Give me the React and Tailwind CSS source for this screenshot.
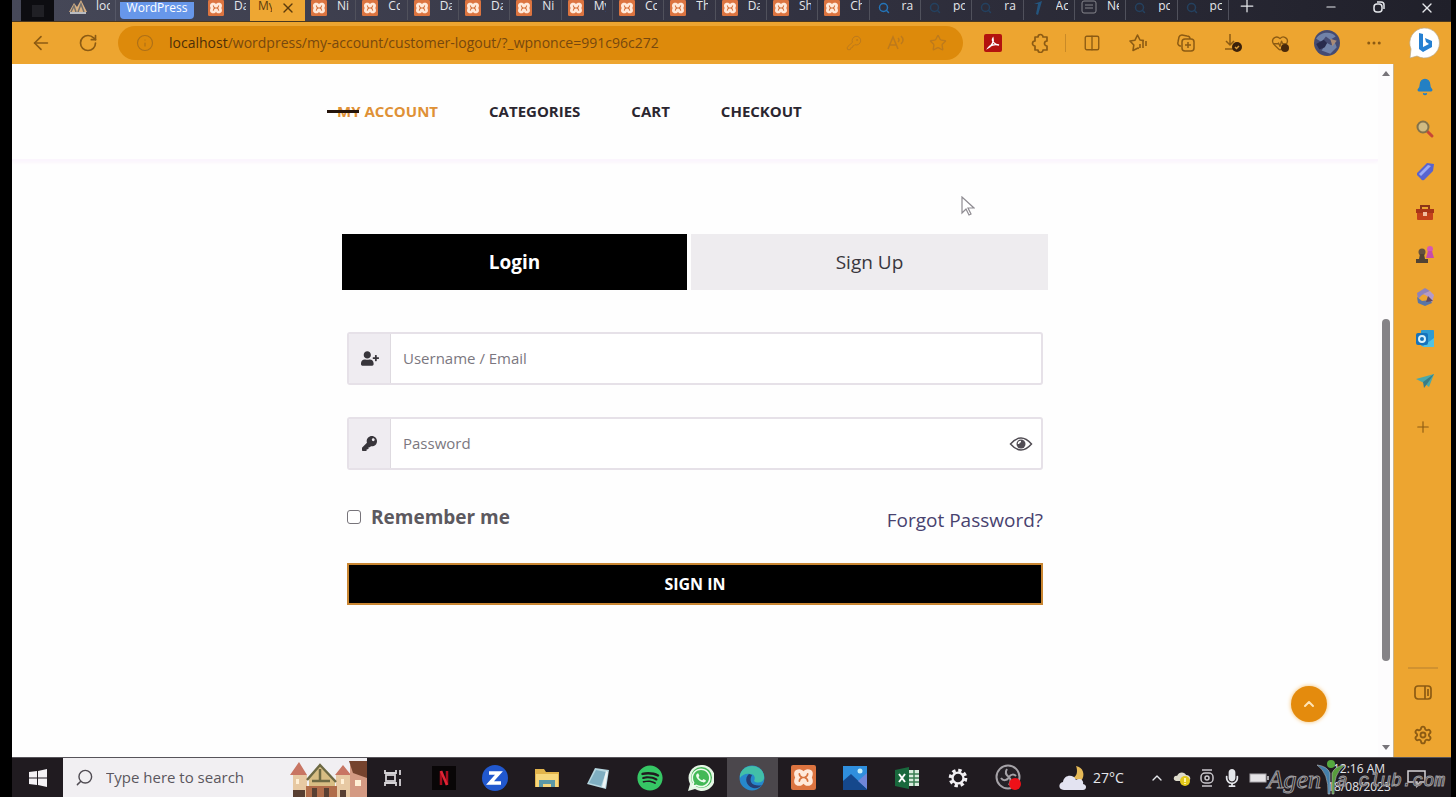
import {
  ArrowLeft, Bell, ChevronUp, Columns2, HeartPulse, Info, KeyRound, Minus,
  MoreHorizontal, Plus, RotateCw, Search, Settings, Star, X,
} from "lucide-react";
import { FaKey, FaMicrophone, FaSpotify, FaUserPlus, FaWhatsapp } from "react-icons/fa";


const tabs = [
  { title: "Ni", icon: "xampp" },
  { title: "Cc", icon: "xampp" },
  { title: "Da", icon: "xampp" },
  { title: "Da", icon: "xampp" },
  { title: "Ni", icon: "xampp" },
  { title: "My", icon: "xampp" },
  { title: "Cc", icon: "xampp" },
  { title: "Th", icon: "xampp" },
  { title: "Da", icon: "xampp" },
  { title: "Sh", icon: "xampp" },
  { title: "Ch", icon: "xampp" },
  { title: "ra", icon: "search" },
  { title: "po", icon: "dim" },
  { title: "ra", icon: "dim" },
  { title: "Ac", icon: "bolt" },
  { title: "Ne", icon: "news" },
  { title: "pc", icon: "dim" },
  { title: "pc", icon: "dim" },
];

function Xampp({ className }) {
  return (
    <svg viewBox="0 0 24 24" className={className}>
      <rect width="24" height="24" rx="2" fill="#dc7440" />
      <path d="M8 4c2 0 3 1 4 2 1-1 2-2 4-2 5 0 6 4 4 8 2 4 1 8-4 8-2 0-3-1-4-2-1 1-2 2-4 2-5 0-6-4-4-8-2-4-1-8 4-8z" fill="#ffe9da" />
      <path d="M8 8.500q0 2.500 3 3.500-3 1-3 3.500M16 8.500q0 2.500-3 3.500 3 1 3 3.500M9.500 12h5" fill="none" stroke="#d8743f" strokeWidth="1.600" strokeLinecap="round" />
    </svg>
  );
}

function TabIcon({ icon }) {
  if (icon === "xampp") return <Xampp className="size-4 shrink-0" />;
  if (icon === "search") return <Search className="size-4 shrink-0 p-0.5 text-[#2474b8]" strokeWidth={3} />;
  if (icon === "dim") return <Search className="size-4 shrink-0 p-0.5 text-[#24415f]" strokeWidth={3} />;
  if (icon === "bolt") {
    return (
      <svg viewBox="0 0 16 16" className="size-4 shrink-0">
        <path d="M4 4l8-3-4 14-2-1 2-10z" fill="#24557e" />
      </svg>
    );
  }
  return (
    <svg viewBox="0 0 16 16" className="size-4 shrink-0" fill="none" stroke="#85858c">
      <rect x="1" y="1" width="14" height="12" rx="2" />
      <path d="M4 5h8M4 8h8" />
    </svg>
  );
}

function TabStrip() {
  return (
    <div className="flex h-[22px] items-end overflow-hidden border-b border-[#4a3820] bg-linear-to-r from-[#464858] via-[#343443] to-[#20202a] text-xs text-gray-200">
      <div className="flex h-full w-[42px] justify-end">
        <div className="flex h-full w-[33px] items-center justify-center bg-[#0d0d11]">
          <span className="size-3 bg-[#202025]" />
        </div>
      </div>
      <button className="flex h-full w-[62px] items-start gap-2 overflow-hidden border-r border-[#555766] pl-3.5 leading-3">
        <svg viewBox="0 0 20 16" className="w-5 shrink-0">
          <path d="M1 12L6 3l3 4 4-7 6 12z" fill="#d9b184" />
          <path d="M3 12l3-6 2 6M10 12l3-8 3 8" fill="none" stroke="#72706e" strokeWidth="1.500" />
          <path d="M2 13h16" stroke="#b9bcc2" strokeWidth="2" />
        </svg>
        <span className="w-3.5 overflow-hidden">loc</span>
      </button>
      <div className="h-full w-[86px] px-1">
        <button className="h-[17px] w-[74px] rounded-b bg-[#6797ea] pb-1 text-xs leading-3 text-white">WordPress</button>
      </div>
      <button className="flex h-full w-12 items-start gap-2.5 overflow-hidden pl-1.5 leading-3">
        <Xampp className="size-4 shrink-0" />
        <span className="w-3 shrink-0 overflow-hidden">Da</span>
      </button>
      <div className="flex h-full w-[55px] items-start gap-2 bg-[#eea733] pl-2 leading-3 text-[#5b3b0c]">
        <span className="w-3.5 overflow-hidden">My</span>
        <button aria-label="Close tab"><X className="size-4" /></button>
      </div>
      <div className="flex h-full min-w-0 flex-1 items-start">
        {tabs.map((tab, i) => (
          <button key={i} className="flex h-5 min-w-0 flex-1 items-start overflow-hidden border-r border-[#50515c] pl-1.5">
            <TabIcon icon={tab.icon} />
            <span className="ml-2.5 w-3 shrink-0 overflow-hidden text-left leading-3">{tab.title}</span>
          </button>
        ))}
      </div>
      <div className="flex h-full w-[222px] items-start leading-3">
        <button aria-label="New tab" className="w-9 pl-2"><Plus className="-mt-1 size-5" strokeWidth={1.5} /></button>
        <button aria-label="Minimize" className="ml-auto flex w-12 justify-center"><Minus className="size-3.5" /></button>
        <button aria-label="Restore" className="flex w-12 justify-center">
          <svg viewBox="0 0 14 14" className="size-3.5" fill="none" stroke="currentColor" strokeWidth="1.500">
            <rect x="2" y="4" width="8" height="8" rx="3" />
            <path d="M5 2h4a3 3 0 0 1 3 3v4" />
          </svg>
        </button>
        <button aria-label="Close" className="flex w-12 justify-center"><X className="size-4" /></button>
      </div>
    </div>
  );
}

function ToolButton({ label, children }) {
  return (
    <button aria-label={label} className="flex w-[47px] items-center justify-center">
      {children}
    </button>
  );
}

function Toolbar() {
  return (
    <div className="flex h-[42px] items-center bg-[#eda530] text-[#8c5b13]">
      <button aria-label="Back" className="ml-[18px]"><ArrowLeft className="size-[22px]" strokeWidth={1.8} /></button>
      <button aria-label="Reload" className="ml-[26px]"><RotateCw className="size-5" strokeWidth={2} /></button>
      <div className="ml-5 flex h-[34px] min-w-0 flex-1 items-center rounded-full bg-[#dd8a0b] pr-4 pl-[18px]">
        <Info className="size-[18px] shrink-0 text-[#ad7018]" strokeWidth={1.5} />
        <p className="ml-[15px] flex-1 truncate text-sm text-[#77480e]">
          <span className="text-[#4d2e08]">localhost</span>/wordpress/my-account/customer-logout/?_wpnonce=991c96c272
        </p>
        <div className="flex items-center gap-6 text-[#bd7a1c]">
          <KeyRound className="size-[18px] p-px" strokeWidth={1.5} />
          <svg viewBox="0 0 18 18" className="size-[18px]" fill="none" stroke="currentColor" strokeWidth="1.500">
            <path d="M1 15L6 3l5 12M3 11h6M11 4q2 2 0 4M14 2q4 4 0 8" />
          </svg>
          <Star className="size-[18px]" strokeWidth={1.8} />
        </div>
      </div>
      <div className="ml-1.5 flex h-full">
        <ToolButton label="Adobe Acrobat">
          <svg viewBox="0 0 18 18" className="size-[18px]">
            <rect width="18" height="18" rx="2" fill="#b3120e" />
            <path d="M4 14c4-2 6-7 5-10-2 3 2 7 6 7-4-1-9 0-11 3z" fill="none" stroke="#fff" strokeWidth="1.300" />
          </svg>
        </ToolButton>
        <ToolButton label="Extensions">
          <svg viewBox="0 0 20 20" className="size-5" fill="none" stroke="currentColor" strokeWidth="1.700" strokeLinejoin="round">
            <path d="M5 4h3a2.500 2.500 0 0 1 5 0h4v4a2.500 2.500 0 0 0 0 5v4h-4a2.500 2.500 0 0 1-5 0H5v-4a2.500 2.500 0 0 1 0-5z" />
          </svg>
        </ToolButton>
        <span className="mx-0.5 my-3 w-px bg-[#c98a27]" />
        <ToolButton label="Split screen"><Columns2 className="h-[18px] w-5" strokeWidth={1.8} /></ToolButton>
        <ToolButton label="Favorites">
          <svg viewBox="0 0 20 20" className="size-5" fill="none" stroke="currentColor" strokeWidth="1.600" strokeLinejoin="round">
            <path d="M10 15.500l-1-.5-5 2.500.8-5.500L1 8l5-.8L8.500 2 11 7l4 .6M14 7v8M17 8v5M11 11v4" />
          </svg>
        </ToolButton>
        <ToolButton label="Collections">
          <svg viewBox="0 0 20 20" className="size-5" fill="none" stroke="currentColor" strokeWidth="1.500">
            <path d="M5 13H4a3 3 0 0 1-2-4l1-5a3 3 0 0 1 3-2l5 1a3 3 0 0 1 3 3" />
            <rect x="6" y="6" width="12" height="12" rx="3" />
            <path d="M12 9v6M9 12h6" />
          </svg>
        </ToolButton>
        <ToolButton label="Downloads">
          <svg viewBox="0 0 20 20" className="size-5" fill="none" stroke="currentColor" strokeWidth="1.500">
            <path d="M7 1v11M3 8l4 4 4-4M2 16h8" />
            <circle cx="14" cy="14" r="5" fill="#3b210b" stroke="none" />
            <path d="M12 14l1.500 1.500L16 13" stroke="#d99a36" />
          </svg>
        </ToolButton>
        <ToolButton label="Browser essentials">
          <span className="relative">
            <HeartPulse className="size-[18px]" strokeWidth={1.8} />
            <span className="absolute right-0 bottom-0 size-2 rounded-full bg-[#4a2a0b]" />
          </span>
        </ToolButton>
        <ToolButton label="Profile">
          <svg viewBox="0 0 24 24" className="size-[26px]">
            <circle cx="12" cy="12" r="12" fill="#454b72" />
            <path d="M2 8c4-7 15-7 18-2l-5 3-4-3-4 5zM7 19l5-7 4 2 3-3 2 5-6 6z" fill="#7182a8" />
            <path d="M9 9l3 3-2 4-5 2-3-5z" fill="#292b4d" />
            <path d="M15 8l6 2-4 5z" fill="#a98b78" />
          </svg>
        </ToolButton>
        <ToolButton label="More"><MoreHorizontal className="size-[18px]" /></ToolButton>
      </div>
      <button aria-label="Bing chat" className="flex w-[54px] justify-center">
        <svg viewBox="0 0 32 32" className="size-8">
          <path d="M16 1a15 15 0 1 1-7 28l-7 2 1-9A15 15 0 0 1 16 1z" fill="#fff" stroke="#b9a98b" strokeWidth=".7" />
          <path d="M11 6l4 1v13l6-3-3-2-1-4 7 3v6l-9 5-4-3z" fill="#2580d2" />
        </svg>
      </button>
    </div>
  );
}

const navLinks = ["CATEGORIES", "CART", "CHECKOUT"];

function SiteHeader() {
  return (
    <header className="h-[97px] border-b-2 border-[#fbf5fd] shadow-[0_1px_4px_#f9f1fb]">
      <nav className="flex h-[93px] items-center gap-[51px] pl-[325px] text-[15px] leading-5 font-bold text-[#2b2630]">
        <a href="#account" className="relative text-[#df9136]">
          MY ACCOUNT
          <span className="absolute top-[9px] -left-2.5 h-[3px] w-8 bg-[#24140a]" />
        </a>
        {navLinks.map((name) => (
          <a key={name} href={"#" + name.toLowerCase()}>{name}</a>
        ))}
      </nav>
    </header>
  );
}

function Field({ id, label, type, icon, children }) {
  return (
    <div className="flex h-[53px] overflow-hidden rounded-[3px] border-2 border-[#e6e1e8] bg-white">
      <label htmlFor={id} aria-label={label} className="flex w-[42px] items-center justify-center border-r border-[#dedae0] bg-[#efecf1] text-[#38353b]">
        {icon}
      </label>
      <input id={id} type={type} placeholder={label} className="min-w-0 flex-1 px-3 text-[15px] text-gray-800 outline-none placeholder:text-[#7b7780]" />
      {children}
    </div>
  );
}

function LoginForm() {
  return (
    <div className="mx-auto mt-[73px] w-full max-w-[706px]">
      <div className="flex h-14 gap-1 text-[19px]">
        <button className="w-[345px] bg-black font-bold text-white">Login</button>
        <button className="flex-1 bg-[#eeecef] text-[#39363d]">Sign Up</button>
      </div>
      <form className="mt-[42px] px-[5px]">
        <div className="flex flex-col gap-8">
          <Field id="username" label="Username / Email" type="text" icon={<FaUserPlus className="h-[15px] w-[18px]" />} />
          <Field id="password" label="Password" type="password" icon={<FaKey className="size-[15px]" />}>
            <button type="button" aria-label="Show password" className="mr-2">
              <svg viewBox="0 0 24 16" className="h-4 w-6" fill="none" stroke="#514d54" strokeWidth="1.500">
                <path d="M1.500 8Q12-4 22.500 8 12 20 1.500 8z" />
                <circle cx="12" cy="8" r="4.500" fill="#514d54" stroke="none" />
                <path d="M9.500 8A2.500 2.500 0 0 1 12 5.500" stroke="#fff" />
              </svg>
            </button>
          </Field>
        </div>
        <div className="mt-[31px] flex items-center justify-between text-[19px] leading-8">
          <label className="flex items-center gap-2.5 pb-1.5 font-bold text-[#5c595f]">
            <input type="checkbox" className="size-3.5 appearance-none rounded-[3px] border border-[#77747a] bg-white checked:bg-gray-700" />
            Remember me
          </label>
          <a href="#forgot" className="text-[#48426f]">Forgot Password?</a>
        </div>
        <button type="button" className="mt-6 h-[42px] w-full border-2 border-[#c98632] bg-black text-base font-bold text-white">
          SIGN IN
        </button>
      </form>
    </div>
  );
}

function Scrollbar() {
  return (
    <div className="flex w-4 shrink-0 flex-col items-center border-r border-[#c9b48e] bg-[#fdfcfd] py-[7px]">
      <span className="border-x-4 border-b-[5px] border-x-transparent border-b-[#77747a]" />
      <div className="flex w-2 flex-1 flex-col pt-[243px] pb-[84px]">
        <span className="flex-1 rounded-full bg-[#858387]" />
      </div>
      <span className="border-x-4 border-t-[5px] border-x-transparent border-t-[#77747a]" />
    </div>
  );
}

const sidebarIcons = [
  { name: "Notifications", art: <Bell className="size-5 p-px" fill="#2380c4" color="#2380c4" /> },
  { name: "Search", art: (
    <svg viewBox="0 0 20 20" className="size-5">
      <path d="M11 11l6 6" stroke="#c74636" strokeWidth="3" strokeLinecap="round" />
      <circle cx="8" cy="8" r="5.500" fill="#d0bb83" stroke="#81724c" strokeWidth="2" />
    </svg>
  ) },
  { name: "Shopping", art: (
    <svg viewBox="0 0 20 20" className="size-5">
      <path d="M2 12L12 2l7 1-1 7L9 19q-2 1-3-1l-4-4z" fill="#5864d0" />
      <path d="M4 13l9-9 3 1-10 10z" fill="#9ba9f4" />
    </svg>
  ) },
  { name: "Tools", art: (
    <svg viewBox="0 0 20 20" className="size-5">
      <path d="M6 6V3h8v3" fill="none" stroke="#8c3518" strokeWidth="2" />
      <rect x="2" y="7" width="16" height="10" rx="1" fill="#c4421b" />
      <path d="M1 6h18v4H1z" fill="#a83518" />
      <path d="M8 9h4v4H8z" fill="#f0bda0" />
    </svg>
  ) },
  { name: "Games", art: (
    <svg viewBox="0 0 20 20" className="size-5">
      <circle cx="15" cy="4" r="3" fill="#d45ab4" />
      <path d="M13 6h4l2 7h-8z" fill="#c74cab" />
      <circle cx="7" cy="7" r="3.500" fill="#65513e" />
      <path d="M5 9h4l1 5h3v4H1v-4h3z" fill="#514334" />
    </svg>
  ) },
  { name: "Microsoft 365", art: (
    <svg viewBox="0 0 20 20" className="size-5">
      <path d="M10 1l5 3-8 4-4 4-1-6z" fill="#8d83bd" />
      <path d="M15 4l4 4-2 8-5-7-4-2z" fill="#b49ac7" />
      <path d="M2 10l5 4 8-1 2 3-7 3-7-3z" fill="#5975a6" />
      <path d="M13 9l5 5-7 1z" fill="#624960" />
    </svg>
  ) },
  { name: "Outlook", art: (
    <svg viewBox="0 0 20 20" className="size-5">
      <rect x="6" y="1" width="13" height="16" rx="1" fill="#2f9bd3" />
      <path d="M19 9v9H7z" fill="#53c2e1" />
      <rect x="1" y="4" width="12" height="12" rx="2" fill="#1673bb" />
      <circle cx="7" cy="10" r="3" fill="none" stroke="#d8f1fa" strokeWidth="2" />
    </svg>
  ) },
  { name: "Drop", art: (
    <svg viewBox="0 0 20 20" className="size-5">
      <path d="M1 8l18-5-5 13-5-4z" fill="#4ba9aa" />
      <path d="M19 3L8 11l1 6 3-4z" fill="#397c87" />
    </svg>
  ) },
];

function Sidebar() {
  return (
    <aside className="flex w-[57px] shrink-0 flex-col items-center bg-[#eda530] pt-0.5 text-[#8c5b13]">
      {sidebarIcons.map(({ name, art }) => (
        <button key={name} aria-label={name} className="flex h-[42px] w-full items-center justify-center pl-1">{art}</button>
      ))}
      <button aria-label="Customize" className="mt-4"><Plus className="size-[18px]" strokeWidth={1.5} /></button>
      <span className="mt-auto h-0.5 w-[30px] bg-[#d19230]" />
      <button aria-label="Sidebar" className="mt-3.5">
        <svg viewBox="0 0 20 20" className="size-5" fill="none" stroke="currentColor" strokeWidth="1.700">
          <rect x="2" y="3" width="16" height="13" rx="3" />
          <path d="M12 3v13M15 6v7" />
        </svg>
      </button>
      <button aria-label="Settings" className="mt-[22px] mb-3"><Settings className="size-5" strokeWidth={2.2} /></button>
    </aside>
  );
}

const taskbarApps = [
  { name: "Task View", art: (
    <svg viewBox="0 0 20 18" className="w-5" fill="none" stroke="#d5d3d6" strokeWidth="1.800">
      <path d="M2 1v3h11V1M2 17v-3h11v3M17 1v5M17 10v7" />
      <rect x="3" y="6" width="9" height="6" />
    </svg>
  ) },
  { name: "Netflix", art: (
    <svg viewBox="0 0 24 24" className="size-6">
      <rect width="24" height="24" fill="#090607" />
      <path d="M9 5v14M15 5v14" stroke="#a90c1c" strokeWidth="2.500" />
      <path d="M9 5l6 14" stroke="#df2636" strokeWidth="2.500" />
    </svg>
  ) },
  { name: "Zoom", art: (
    <svg viewBox="0 0 26 26" className="size-[26px]">
      <circle cx="13" cy="13" r="13" fill="#2158ce" />
      <path d="M7 8h10L8 18h11" fill="none" stroke="#fff" strokeWidth="3.500" />
    </svg>
  ) },
  { name: "File Explorer", art: (
    <svg viewBox="0 0 24 20" className="w-6">
      <path d="M0 1h9l2 3h13v15H0z" fill="#e2b44b" />
      <path d="M1 6h22v13H1z" fill="#f7d77c" />
      <path d="M4 12h16v7h-4v-3H8v3H4z" fill="#5c99a6" />
    </svg>
  ) },
  { name: "Notepad", art: (
    <svg viewBox="0 0 24 24" className="size-6">
      <path d="M9 2l14 2-3 19L1 18z" fill="#b5d6df" />
      <path d="M10 4l10 2-5 14-12-3z" fill="#7fafc2" />
      <path d="M20 5l2 1-3 16-3-1z" fill="#ecf4f5" />
    </svg>
  ) },
  { name: "Spotify", art: <FaSpotify className="size-[26px] text-[#36c765]" /> },
  { name: "WhatsApp", art: (
    <span className="relative flex size-[26px]">
      <svg viewBox="0 0 26 26" className="size-[26px]">
        <path d="M13 0a13 13 0 1 1-6 24l-7 2 2-7A13 13 0 0 1 13 0z" fill="#e5f6e5" />
        <circle cx="13.500" cy="12.500" r="10.500" fill="#43b957" />
      </svg>
      <FaWhatsapp className="absolute inset-0 size-[26px] p-0.5 text-[#eefbee]" />
    </span>
  ) },
  { name: "Edge", active: true, art: (
    <svg viewBox="0 0 26 26" className="size-[26px]">
      <circle cx="13" cy="13" r="12.500" fill="#2688cc" />
      <path d="M1 10C4-2 23-2 25 11c1 7-7 8-10 5 2-4 0-7-4-7-4-1-8 1-10 4z" fill="#42bfa8" />
      <path d="M10 9c-5 4-3 12 4 14 4 1 7-1 9-3-3 1-9 1-11-3-1-3 0-5 1-7z" fill="#263d73" />
    </svg>
  ) },
  { name: "XAMPP", art: <Xampp className="size-[25px]" /> },
  { name: "Photos", art: (
    <svg viewBox="0 0 24 24" className="size-6">
      <rect width="24" height="24" fill="#2f8fdd" />
      <path d="M0 15L8 8l16 15v1H0z" fill="#15488c" />
      <path d="M15 15l9-8v16z" fill="#6f86d8" />
      <circle cx="17" cy="5" r="2.500" fill="#c6f0fa" />
    </svg>
  ) },
  { name: "Excel", art: (
    <svg viewBox="0 0 24 22" className="w-6">
      <rect x="11" y="3" width="13" height="16" fill="#d9ebdd" />
      <path d="M12 7h12M12 11h12M12 15h12M19 3v16" stroke="#3a7d51" strokeWidth="1.500" />
      <path d="M0 3l14-3v22L0 19z" fill="#19693d" />
      <path d="M4 7l6 8M10 7l-6 8" stroke="#fff" strokeWidth="2" />
    </svg>
  ) },
  { name: "Settings", art: (
    <svg viewBox="0 0 22 22" className="size-5" fill="none" stroke="#f2f0f3">
      <circle cx="11" cy="11" r="8.500" strokeWidth="3.500" strokeDasharray="3.700 2.975" />
      <circle cx="11" cy="11" r="6" strokeWidth="2.500" />
    </svg>
  ) },
  { name: "OBS Studio", art: (
    <svg viewBox="0 0 28 28" className="size-7">
      <circle cx="13" cy="13" r="11.500" fill="#252126" stroke="#a5a2a7" strokeWidth="2" />
      <path d="M12 5c-2 3-1 6 2 8 2-3 5-3 7-1M14 13c-2 4-6 4-8 1M14 13c2 2 2 5 0 8" fill="none" stroke="#a5a2a7" strokeWidth="2" />
      <circle cx="20" cy="20" r="6" fill="#ee1118" />
    </svg>
  ) },
];

function Taskbar() {
  return (
    <footer className="flex h-10 shrink-0 border-t border-[#57545a] bg-[#201b20] text-gray-200">
      <button aria-label="Start" className="flex w-[51px] items-center justify-center">
        <svg viewBox="0 0 18 18" className="size-[18px]" fill="#f4f2f5">
          <path d="M0 3l8-1v6.500H0zM9 2l9-2v8.500H9zM0 9.500h8V16l-8-1zM9 9.500h9V18l-9-2z" />
        </svg>
      </button>
      <div className="flex w-[304px] items-center bg-[#f1eff2] pl-3 text-[#504c53]">
        <Search className="size-[19px] -scale-x-100" strokeWidth={1.8} />
        <input aria-label="Search" placeholder="Type here to search" className="ml-3 min-w-0 flex-1 text-[15px] outline-none placeholder:text-[#5b575e]" />
        <svg viewBox="0 0 77 36" className="h-9 w-[77px] self-end">
          <path d="M3 14h14v22H3zM46 14h14v22H46z" fill="#e7c9a3" />
          <path d="M0 14L9 1l8 13zM45 14L53 4l8 10z" fill="#c87563" />
          <path d="M60 4l12-3 5 2v33H60z" fill="#d49a83" />
          <path d="M59 0h18v17L63 12z" fill="#75432e" />
          <path d="M19 18L30 5l15 16v15H19z" fill="#d8bd83" />
          <path d="M17 19L30 4l16 17M22 20h18M30 8v12" fill="none" stroke="#6d6943" strokeWidth="2.500" />
          <path d="M16 25h31v11H16z" fill="#b06c4a" />
          <path d="M3 29h12v7H3zM22 27h5v9h-5zM34 27h5v9h-5zM50 29h6v7h-6z" fill="#583f32" />
          <path d="M6 18h3v5H6zM51 18h3v5h-3zM65 19h6v6h-6z" fill="#fff0d6" />
        </svg>
      </div>
      <div className="flex min-w-0 flex-1">
        {taskbarApps.map(({ name, art, active }) => (
          <button key={name} aria-label={name} className={active ? "flex flex-1 items-center justify-center bg-[#4b474c]" : "flex flex-1 items-center justify-center"}>
            {art}
          </button>
        ))}
      </div>
      <div className="relative flex w-[416px] items-center pl-6">
        <svg viewBox="0 0 28 28" className="size-7">
          <path d="M17 2c7 1 10 9 5 15l-8-3c4-2 5-7 3-12z" fill="#e5b957" />
          <path d="M5 26c-6 0-6-7-1-8 1-8 11-8 13-2 5-3 8 1 7 4 5 1 3 6 0 6z" fill="#e3e3f1" />
        </svg>
        <span className="ml-1.5 w-9 text-sm">27°C</span>
        <div className="ml-5 flex items-center gap-2">
          <ChevronUp className="size-4" />
          <svg viewBox="0 0 18 18" className="size-[18px]">
            <path d="M3 12c-4-1-2-6 1-5 2-5 8-4 9-1 5 0 6 6 1 6z" fill="#dedbcb" />
            <circle cx="12" cy="12" r="5" fill="#e3c91b" />
            <path d="M12 9v4M12 14v1" stroke="#fff6a5" strokeWidth="2" />
          </svg>
          <svg viewBox="0 0 16 18" className="h-[18px] w-4" fill="none" stroke="#c9c6cb" strokeWidth="1.500">
            <path d="M3 1h10M3 17h10" />
            <rect x="2" y="4" width="12" height="10" rx="4" />
            <circle cx="8" cy="9" r="2" />
          </svg>
          <FaMicrophone className="size-[18px]" />
          <svg viewBox="0 0 20 14" className="h-3.5 w-5">
            <rect x="1" y="3" width="16" height="8" fill="#e6e4e7" stroke="#aaa8ac" />
            <path d="M18 5h2v4h-2z" fill="#aaa8ac" />
          </svg>
        </div>
        <time className="absolute top-0.5 right-[60px] w-16 text-center text-xs leading-[18px] whitespace-nowrap">
          12:16 AM<br />18/08/2023
        </time>
        <button aria-label="Notifications" className="absolute right-6">
          <svg viewBox="0 0 20 20" className="size-5" fill="none" stroke="#d5d3d6" strokeWidth="1.500">
            <path d="M1 3h17v11h-5l-3 4v-4H1z" />
          </svg>
        </button>
        <div className="absolute -top-1 right-1.5 flex items-center text-[#1b191b] [-webkit-text-stroke:1px_#9b999d]">
          <span className="pt-1.5 font-['Liberation_Serif'] text-[26px] italic">Agen</span>
          <svg viewBox="0 0 28 36" className="-mr-2 -ml-1 h-9 w-7">
            <circle cx="14" cy="5" r="4" fill="#54a83e" />
            <path d="M0 6q10 1 13 8v21h-2q1-21-11-29z" fill="#437eaa" stroke="#b5b8ba" strokeWidth=".6" />
            <path d="M28 6q-10 1-13 8v21h2q-1-21 11-29z" fill="#579c3c" stroke="#b5b8ba" strokeWidth=".6" />
          </svg>
          <span className="pt-2 font-['Liberation_Mono'] text-lg italic">a club.com</span>
        </div>
      </div>
    </footer>
  );
}

export default function App() {
  return (
    <div className="flex h-screen flex-col overflow-hidden bg-black pr-[5px] pl-3 font-['Open_Sans',sans-serif]">
      <TabStrip />
      <Toolbar />
      <div className="flex min-h-0 flex-1">
        <main className="relative min-w-0 flex-1 overflow-hidden bg-[#fefefe]">
          <SiteHeader />
          <LoginForm />
          <button aria-label="Back to top" className="absolute right-[51px] bottom-[35px] flex size-9 items-center justify-center rounded-full bg-[#e48b0d] text-[#ffe4b6] shadow-[0_0_4px_#f4bd69]">
            <ChevronUp className="size-4" strokeWidth={3} />
          </button>
          <svg viewBox="0 0 14 20" className="absolute top-[132px] left-[949px] h-5 w-3.5">
            <path d="M1 1v16l4-4 3 6 2-1-3-6h6z" fill="#fff" stroke="#8e8b91" strokeWidth="1.200" />
          </svg>
        </main>
        <Scrollbar />
        <Sidebar />
      </div>
      <Taskbar />
    </div>
  );
}
